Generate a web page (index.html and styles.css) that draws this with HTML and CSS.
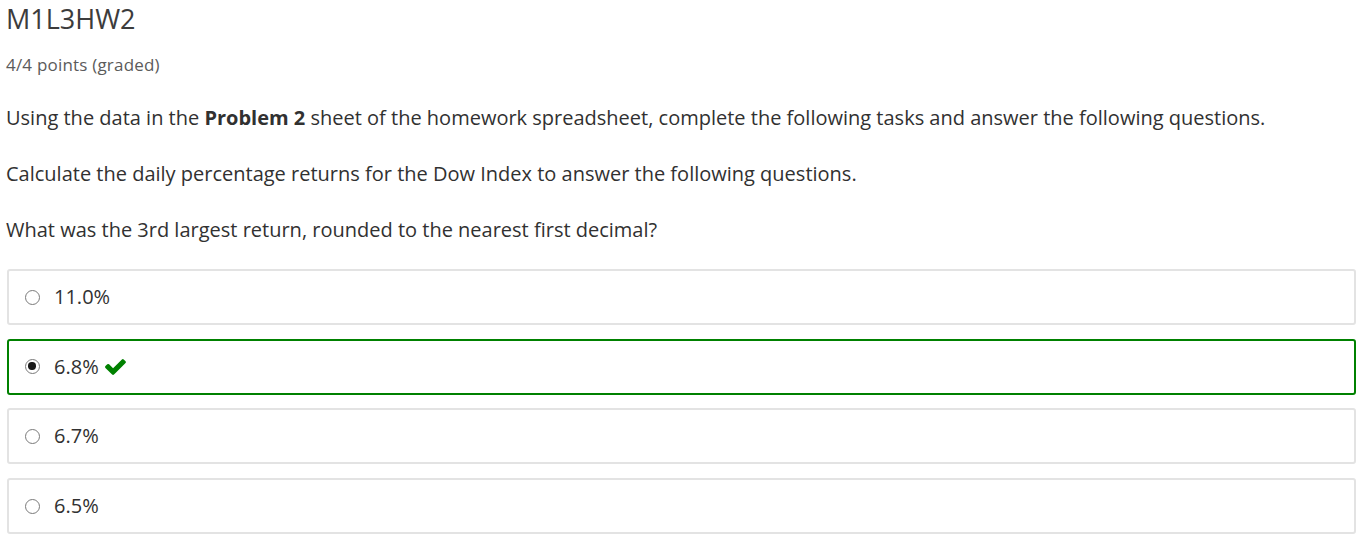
FILE: index.html
```html
<!DOCTYPE html>
<html>
<head>
<meta charset="utf-8">
<link rel="stylesheet" href="styles.css">
</head>
<body>
<div class="problem">
  <h2 class="title">M1L3HW2</h2>
  <div class="points">4/4 points (graded)</div>
  <p class="text">Using the data in the <strong>Problem 2</strong> sheet of the homework spreadsheet, complete the following tasks and answer the following questions.</p>
  <p class="text">Calculate the daily percentage returns for the Dow Index to answer the following questions.</p>
  <p class="text">What was the 3rd largest return, rounded to the nearest first decimal?</p>
  <div class="choices">
    <label class="choice"><span class="radio"></span><span class="label">11.0%</span></label>
    <label class="choice correct"><span class="radio checked"></span><span class="label">6.8%</span>
      <svg class="check" width="21" height="16" viewBox="121 334 1550 1188"><path fill="#008100" d="M1671 566q0 40-28 68l-724 724-136 136q-28 28-68 28t-68-28l-136-136-362-362q-28-28-28-68t28-68l136-136q28-28 68-28t68 28l294 295 656-657q28-28 68-28t68 28l136 136q28 28 28 68z"/></svg>
    </label>
    <label class="choice"><span class="radio"></span><span class="label">6.7%</span></label>
    <label class="choice"><span class="radio"></span><span class="label">6.5%</span></label>
  </div>
</div>
</body>
</html>
```
FILE: styles.css
```css
html, body {
  margin: 0;
  padding: 0;
  background: #fff;
}
body {
  font-family: "Open Sans", "Liberation Sans", sans-serif;
  color: #313131;
}
.problem {
  padding: 1px 8px 0 6px;
}
.title {
  margin: 0;
  font-size: 27px;
  line-height: 36px;
  font-weight: 400;
  color: #3c3c3c;
}
.points {
  margin-top: 17px;
  font-size: 17px;
  line-height: 22px;
  letter-spacing: 0.2px;
  color: #5b5b5b;
}
.text {
  margin: 29px 0 0;
  font-size: 20px;
  line-height: 26px;
  letter-spacing: 0;
}
.text + .text {
  margin-top: 30px;
}
.choices {
  margin: 26px 0 0 1px;
  display: flex;
  flex-direction: column;
  gap: 13.7px;
}
.choice {
  display: flex;
  align-items: center;
  height: 56px;
  box-sizing: border-box;
  border: 2px solid #e3e3e3;
  border-radius: 3px;
  padding-left: 16px;
  font-size: 20px;
}
.choice.correct {
  border-color: #008100;
}
.radio {
  flex: none;
  width: 15px;
  height: 15px;
  box-sizing: border-box;
  border: 1.6px solid #7a7a7a;
  border-radius: 50%;
  margin-right: 14px;
  position: relative;
}
.radio.checked::after {
  content: "";
  position: absolute;
  left: 2.2px;
  top: 2.2px;
  width: 7.4px;
  height: 7.4px;
  border-radius: 50%;
  background: #1a1a1a;
}
.label {
  line-height: 26px;
}
.check {
  margin-left: 6px;
  margin-top: 1px;
}
```
